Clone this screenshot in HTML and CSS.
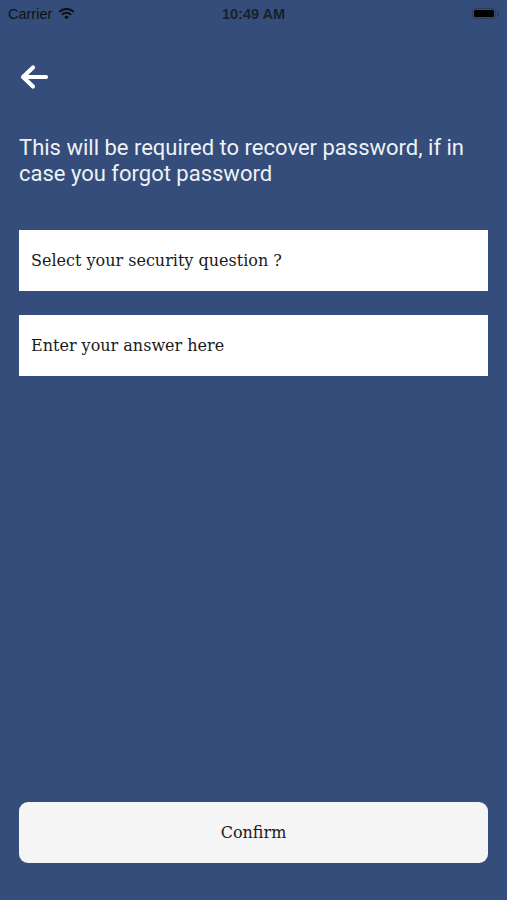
FILE: index.html
```html
<!DOCTYPE html>
<html lang="en">
<head>
<meta charset="utf-8">
<title>Security question</title>
<meta name="viewport" content="width=device-width,initial-scale=1">
<link rel="stylesheet" href="styles.css">
</head>
<body>
<div class="screen">
  <div class="status">
    <div class="status-left">
      <span>Carrier</span>
      <svg class="wifi" width="17" height="12" viewBox="0 0 17 12">
        <path d="M8.5 11.5l2.3-2.6a3.3 3.3 0 0 0-4.6 0z" fill="#111"/>
        <path d="M3.9 6.7a6.6 6.6 0 0 1 9.2 0" stroke="#111" stroke-width="2" fill="none"/>
        <path d="M1.2 3.9a10.4 10.4 0 0 1 14.6 0" stroke="#111" stroke-width="2" fill="none"/>
      </svg>
    </div>
    <div class="status-time">10:49 AM</div>
    <div class="status-right">
      <span class="battery"><span class="battery-fill"></span></span><span class="battery-nub"></span>
    </div>
  </div>

  <div class="nav">
    <svg class="back" width="30" height="28" viewBox="0 0 30 28">
      <path d="M27 14H5M14 4.5L4 14l10 9.5" stroke="#fff" stroke-width="4.2" fill="none" stroke-linecap="round" stroke-linejoin="round"/>
    </svg>
  </div>

  <p class="intro">This will be required to recover password, if in case you forgot password</p>

  <div class="field">Select your security question ?</div>
  <div class="field">Enter your answer here</div>

  <div class="spacer"></div>

  <button class="confirm">Confirm</button>
</div>
</body>
</html>
```

FILE: styles.css
```css
*{box-sizing:border-box}
html,body{margin:0;height:100%}
body{background:#344d7a;font-family:Roboto,"Liberation Sans",sans-serif}
.screen{display:flex;flex-direction:column;height:900px;padding:0 19px 37px}
.status{display:flex;align-items:center;justify-content:space-between;height:28px;margin:0 -11px;padding:0 0 1px;color:#111;font-size:14.5px;font-family:"Liberation Sans",sans-serif}
.status-left{display:flex;align-items:center;gap:6px;width:100px}
.status-time{font-weight:bold;font-size:14.5px;color:#1a1f2b}
.status-right{display:flex;align-items:center;justify-content:flex-end;width:100px}
.battery{display:block;width:24px;height:11px;border:1px solid #2a3d60;border-radius:3px;padding:1px}
.battery-fill{display:block;height:100%;background:#000;border-radius:1.5px}
.battery-nub{display:block;width:1.5px;height:4px;background:#2a3d60;margin-left:1px;border-radius:0 1px 1px 0}
.nav{height:28px;margin-top:35px;display:flex;align-items:center}
.back{display:block}
.intro{margin:44px 0 0;color:#eef1f6;font-size:22px;line-height:26px}
.field{background:#fff;height:61px;display:flex;align-items:center;padding:0 12px;font-family:"DejaVu Serif",serif;font-size:16px;color:#1a1a1a}
.intro+.field{margin-top:43px}
.field+.field{margin-top:24px}
.spacer{flex:1}
.confirm{height:61px;border:0;border-radius:9px;background:#f5f5f5;font-family:"DejaVu Serif",serif;font-size:16px;color:#1a1a1a;width:100%}
```
